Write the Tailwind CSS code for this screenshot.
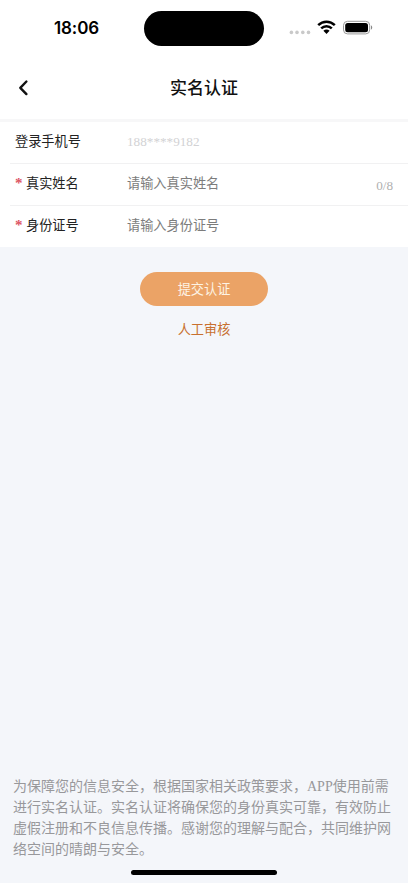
<!DOCTYPE html>
<html lang="zh-CN">
<head>
<meta charset="utf-8">
<meta name="viewport" content="width=device-width, initial-scale=1">
<title>实名认证</title>
<script src="https://cdn.jsdelivr.net/npm/@tailwindcss/browser@4"></script>
</head>
<body class="bg-[#f4f6fa]">
<div class="flex h-[883px] w-[408px] flex-col overflow-hidden bg-[#f4f6fa] font-['Liberation_Serif','Noto_Sans_CJK_SC',serif] text-[13.2px] text-[#222]">
  <!-- Status bar -->
  <div class="flex h-[56px] shrink-0 bg-white pt-[11px]">
    <div class="w-[144px] pl-[54px] pt-[6px] font-['Inter',sans-serif] text-[17px] leading-[23px] font-semibold tracking-[-0.1px] text-black">18:06</div>
    <div class="h-[35px] w-[120px] rounded-full bg-black"></div>
    <div class="flex h-[35px] pl-[25px]">
      <svg class="mt-[19px] h-[5px] w-[22px]" viewBox="0 0 22 5" fill="#c9c9c9"><circle cx="2.4" cy="2.4" r="1.8"/><circle cx="8" cy="2.4" r="1.8"/><circle cx="13.8" cy="2.4" r="1.8"/><circle cx="19.5" cy="2.4" r="1.8"/></svg>
      <svg class="ml-[6px] mt-[9px] h-[14px] w-[19px]" viewBox="0 0 19 14" fill="none" stroke="#000" stroke-width="2.5"><path d="M1.2 5.2C5.9 .6 13.1 .6 17.8 5.2"/><path d="M4.2 8.4c3-2.9 7.6-2.9 10.6 0"/><path d="M6.4 10.8c1.7-1.6 4.5-1.6 6.2 0L9.5 14z" fill="#000" stroke="none"/></svg>
      <svg class="ml-[7px] mt-[9px] h-[15px] w-[30px]" viewBox="0 0 30 15"><rect x=".5" y="1.3" width="26.2" height="12.6" rx="4" fill="none" stroke="#999"/><rect x="2.2" y="3" width="22.8" height="9.2" rx="2.5"/><path d="M28 5.3c1.7.7 1.7 3.7 0 4.4z" fill="#888"/></svg>
    </div>
  </div>
  <!-- Title bar -->
  <div class="grid h-[66px] shrink-0 grid-cols-[60px_1fr_60px] items-center border-b-[3px] border-[#f7f7f8] bg-white">
    <svg class="ml-[18px] h-[18px] w-[11px]" viewBox="0 0 11 18" fill="none" stroke="#111" stroke-width="2.4" stroke-linecap="round" stroke-linejoin="round"><path d="M8.4 2.5 2.3 8.8l6.1 6.3"/></svg>
    <h1 class="pt-[2px] text-center text-[17px] leading-[24px] font-medium text-[#111]">实名认证</h1>
  </div>
  <!-- Form -->
  <div class="shrink-0 bg-white">
    <div class="flex h-[41px] items-center pb-[2px] pl-[15px]">
      <div class="w-[112px]">登录手机号</div><div class="pt-[1px] text-[#d2d2d4]">188****9182</div>
    </div>
    <div class="ml-[10px] h-px bg-[#f1f1f2]"></div>
    <div class="flex h-[41px] items-center pb-[2px] pl-[15px] pr-[15px]">
      <div class="flex w-[112px] gap-[4px]"><span class="w-[7px] text-[15px] leading-[18px] font-bold text-[#dc5463]">*</span><span>真实姓名</span></div>
      <div class="flex-1 text-[#7c7c7c]">请输入真实姓名</div><span class="pt-[5px] text-[#b0b0b0]">0/8</span>
    </div>
    <div class="ml-[10px] h-px bg-[#f1f1f2]"></div>
    <div class="flex h-[41px] items-center pb-[2px] pl-[15px]">
      <div class="flex w-[112px] gap-[4px]"><span class="w-[7px] text-[15px] leading-[18px] font-bold text-[#dc5463]">*</span><span>身份证号</span></div>
      <div class="text-[#7c7c7c]">请输入身份证号</div>
    </div>
  </div>
  <!-- Actions -->
  <div class="flex flex-col items-center pt-[25px]">
    <button class="h-[34px] w-[128px] rounded-full bg-[#eba366] pt-[2px] text-[#fdf3e4]">提交认证</button>
    <a class="mt-[14px] leading-[20px] text-[#c8702f]">人工审核</a>
  </div>
  <p class="mt-auto shrink-0 pl-[13px] pr-[14px] text-[14px] leading-[21px] text-[#98989b]">为保障您的信息安全，根据国家相关政策要求，APP使用前需<br>进行实名认证。实名认证将确保您的身份真实可靠，有效防止<br>虚假注册和不良信息传播。感谢您的理解与配合，共同维护网<br>络空间的晴朗与安全。</p>
  <div class="mx-auto mt-[10px] mb-[8px] h-[5px] w-[146px] shrink-0 rounded-full bg-black"></div>
</div>
</body>
</html>
